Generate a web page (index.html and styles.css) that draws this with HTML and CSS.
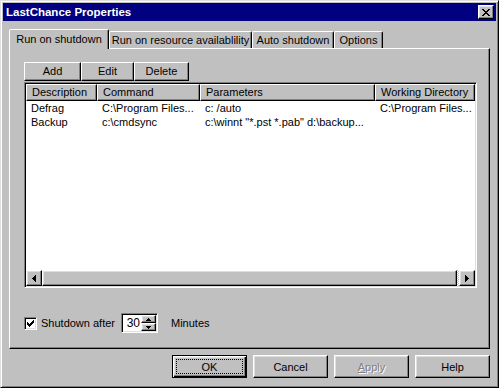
FILE: index.html
```html
<!DOCTYPE html>
<html>
<head>
<meta charset="utf-8">
<link rel="stylesheet" href="styles.css">
</head>
<body>
<div class="window">
  <div class="caption">
    <span class="title">LastChance Properties</span>
    <div class="close raised">
      <svg width="8" height="7" viewBox="0 0 8 7"><path d="M0 0h2v1h-2z M6 0h2v1h-2z M1 1h2v1h-2z M5 1h2v1h-2z M2 2h4v1h-4z M3 3h2v1h-2z M2 4h4v1h-4z M1 5h2v1h-2z M5 5h2v1h-2z M0 6h2v1h-2z M6 6h2v1h-2z" fill="#000"/></svg>
    </div>
  </div>
  <div class="client">
    <div class="tabs">
      <div class="tab sel t1">Run on shutdown</div>
      <div class="tab t2">Run on resource availablility</div>
      <div class="tab t3">Auto shutdown</div>
      <div class="tab t4">Options</div>
    </div>
    <div class="panel">
      <div class="toolbar">
        <div class="tbtn b-add">Add</div>
        <div class="tbtn b-edit">Edit</div>
        <div class="tbtn b-del">Delete</div>
      </div>
      <div class="list">
        <div class="header">
          <div class="hcol c1">Description</div>
          <div class="hcol c2">Command</div>
          <div class="hcol c3">Parameters</div>
          <div class="hcol c4">Working Directory</div>
        </div>
        <div class="rows">
          <div class="row">
            <div class="cell c1">Defrag</div>
            <div class="cell c2">C:\Program Files...</div>
            <div class="cell c3">c: /auto</div>
            <div class="cell c4">C:\Program Files...</div>
          </div>
          <div class="row">
            <div class="cell c1">Backup</div>
            <div class="cell c2">c:\cmdsync</div>
            <div class="cell c3">c:\winnt "*.pst *.pab" d:\backup...</div>
            <div class="cell c4"></div>
          </div>
        </div>
        <div class="hscroll">
          <div class="sbtn raised">
            <svg width="4" height="7" viewBox="0 0 4 7"><path d="M3 0h1v7h-1z M2 1h1v5h-1z M1 2h1v3h-1z M0 3h1v1h-1z" fill="#000"/></svg>
          </div>
          <div class="thumb raised"></div>
          <div class="sbtn raised">
            <svg width="4" height="7" viewBox="0 0 4 7"><path d="M0 0h1v7h-1z M1 1h1v5h-1z M2 2h1v3h-1z M3 3h1v1h-1z" fill="#000"/></svg>
          </div>
        </div>
      </div>
      <div class="options">
        <div class="check">
          <svg width="7" height="7" viewBox="0 0 7 7"><path d="M6 0h1v3h-1z M5 1h1v3h-1z M4 2h1v3h-1z M0 2h1v3h-1z M1 3h1v3h-1z M2 4h1v3h-1z M3 3h1v3h-1z" fill="#000"/></svg>
        </div>
        <div class="lbl">Shutdown after</div>
        <div class="spin">
          <div class="spintext">30</div>
          <div class="updown">
            <div class="ud raised">
              <svg width="5" height="3" viewBox="0 0 5 3"><path d="M2 0h1v1h-1z M1 1h3v1h-3z M0 2h5v1h-5z" fill="#000"/></svg>
            </div>
            <div class="ud raised">
              <svg width="5" height="3" viewBox="0 0 5 3"><path d="M0 0h5v1h-5z M1 1h3v1h-3z M2 2h1v1h-1z" fill="#000"/></svg>
            </div>
          </div>
        </div>
        <div class="unit">Minutes</div>
      </div>
    </div>
    <div class="buttons">
      <div class="btn default"><div class="focus">OK</div></div>
      <div class="btn raised">Cancel</div>
      <div class="btn raised disabled"><span class="u">A</span>pply</div>
      <div class="btn raised">Help</div>
    </div>
  </div>
</div>
</body>
</html>
```
FILE: styles.css
```css
* { box-sizing: border-box; }
html, body { margin: 0; padding: 0; }
body {
  width: 499px;
  height: 388px;
  overflow: hidden;
  background: #c0c0c0;
  font-family: "Liberation Sans", Arial, sans-serif;
  font-size: 11px;
  color: #000;
}
.raised {
  background: #c0c0c0;
  border: 1px solid;
  border-color: #fff #000 #000 #fff;
  box-shadow: inset -1px -1px #808080, inset 1px 1px #dfdfdf;
}
.window {
  width: 499px;
  height: 388px;
  background: #c0c0c0;
  border: 1px solid;
  border-color: #dfdfdf #000 #000 #dfdfdf;
  box-shadow: inset 1px 1px #fff, inset -1px -1px #808080;
  padding: 2px;
  display: flex;
  flex-direction: column;
}
.caption {
  flex: none;
  height: 18px;
  background: #000080;
  display: flex;
  align-items: center;
  justify-content: space-between;
  padding: 0 2px 0 2px;
}
.title {
  color: #fff;
  font-weight: bold;
  font-size: 11.5px;
  padding-left: 1px;
}
.close {
  width: 16px;
  height: 14px;
  display: flex;
  align-items: center;
  justify-content: center;
}
.close svg { display: block; }
.client {
  flex: 1;
  padding: 8px 6px 0 6px;
  display: flex;
  flex-direction: column;
}
.tabs {
  height: 19px;
  display: flex;
  align-items: flex-end;
}
.tab {
  height: 17px;
  border: 1px solid;
  border-bottom: none;
  border-color: #fff #000 transparent #fff;
  border-radius: 2px 2px 0 0;
  box-shadow: inset -1px 0 #808080;
  text-align: center;
  line-height: 13px;
  padding-top: 2px;
  white-space: nowrap;
}
.tab.sel {
  height: 20px;
  margin-bottom: -1px;
  position: relative;
  z-index: 1;
  background: #c0c0c0;
  padding-top: 3px;
}
.t1 { width: 100px; }
.t2 { width: 143px; }
.t3 { width: 82px; }
.t4 { width: 49px; }
.panel {
  height: 301px;
  border: 1px solid;
  border-color: #fff #000 #000 #fff;
  box-shadow: inset -1px -1px #808080;
  padding: 13px 12px 0 14px;
  display: flex;
  flex-direction: column;
}
.toolbar {
  display: flex;
  height: 19px;
  margin-bottom: 1px;
}
.tbtn {
  height: 19px;
  border: 1px solid;
  border-color: #fff #000 #000 #fff;
  box-shadow: inset -1px -1px #808080;
  text-align: center;
  line-height: 16px;
}
.b-add { width: 57px; }
.b-edit { width: 53px; }
.b-del { width: 55px; }
.list {
  width: 453px;
  height: 206px;
  background: #fff;
  border: 1px solid;
  border-color: #808080 #fff #fff #808080;
  box-shadow: inset 1px 1px #000, inset -1px -1px #dfdfdf;
  padding: 1px;
  display: flex;
  flex-direction: column;
}
.header {
  flex: none;
  height: 17px;
  display: flex;
  background: #c0c0c0;
}
.hcol {
  border: 1px solid;
  border-color: #fff #000 #000 #fff;
  box-shadow: inset -1px -1px #808080;
  padding-left: 5px;
  line-height: 14px;
  white-space: nowrap;
  overflow: hidden;
}
.c1 { width: 71px; }
.c2 { width: 103px; }
.c3 { width: 175px; }
.c4 { flex: 1; }
.rows { flex: 1; }
.row {
  display: flex;
  height: 14px;
  line-height: 14px;
}
.cell {
  padding-left: 5px;
  white-space: nowrap;
  overflow: hidden;
}
.hscroll {
  flex: none;
  height: 16px;
  display: flex;
  background-color: #fff;
  background-image: conic-gradient(#c0c0c0 25%, #fff 0 50%, #c0c0c0 0 75%, #fff 0);
  background-size: 2px 2px;
}
.sbtn {
  width: 16px;
  height: 16px;
  display: flex;
  align-items: center;
  justify-content: center;
}
.sbtn svg { display: block; }
.thumb {
  flex: 1;
  margin-right: 2px;
}
.options {
  margin-top: 25px;
  height: 20px;
  display: flex;
  align-items: center;
}
.check {
  width: 13px;
  height: 13px;
  background: #fff;
  border: 1px solid;
  border-color: #808080 #fff #fff #808080;
  box-shadow: inset 1px 1px #000, inset -1px -1px #dfdfdf;
  display: flex;
  align-items: center;
  justify-content: center;
}
.check svg { display: block; }
.lbl {
  width: 84px;
  padding-left: 4px;
  white-space: nowrap;
}
.spin {
  width: 37px;
  height: 20px;
  background: #fff;
  border: 1px solid;
  border-color: #808080 #fff #fff #808080;
  box-shadow: inset 1px 1px #000, inset -1px -1px #dfdfdf;
  padding: 1px;
  display: flex;
}
.spintext {
  flex: 1;
  text-align: right;
  padding-right: 1px;
  line-height: 16px;
  font-size: 12px;
}
.updown {
  width: 15px;
  display: flex;
  flex-direction: column;
}
.ud {
  height: 8px;
  display: flex;
  align-items: center;
  justify-content: center;
}
.ud svg { display: block; }
.unit {
  margin-left: 13px;
}
.buttons {
  margin-top: 6px;
  display: flex;
  justify-content: flex-end;
  gap: 6px;
}
.btn {
  width: 75px;
  height: 23px;
  display: flex;
  align-items: center;
  justify-content: center;
}
.btn.default {
  border: 1px solid #000;
  background: #c0c0c0;
  box-shadow: inset 1px 1px #fff, inset -1px -1px #000, inset -2px -2px #808080, inset 2px 2px #dfdfdf;
  align-items: stretch;
  justify-content: stretch;
}
.focus {
  flex: 1;
  margin: 3px;
  border: 1px dotted #000;
  display: flex;
  align-items: center;
  justify-content: center;
}
.disabled {
  color: #808080;
  text-shadow: 1px 1px 0 #fff;
}
.u { text-decoration: underline; }
```
